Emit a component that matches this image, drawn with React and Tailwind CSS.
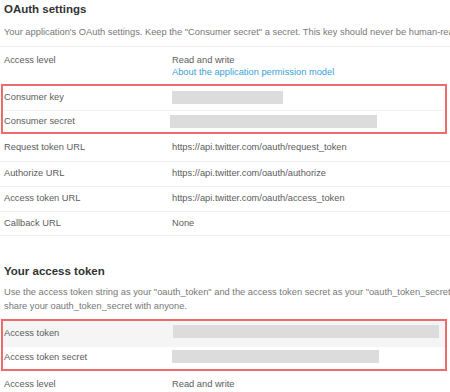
const Row = ({ label, children, className = "", lw = "w-[172px] pl-[4px]" }) => (
  <div className={`flex items-center ${className}`}>
    <div className={`${lw} shrink-0`}>{label}</div>
    <div className="flex-1">{children}</div>
  </div>
)

const Bar = ({ className }) => <div className={`bg-[#dcdcdc] ${className}`} />

const App = () => {
  return (
    <div
      className="w-[450px] h-[392px] overflow-hidden bg-white text-[9.3px] text-[#5c5c5c] whitespace-nowrap"
      style={{ fontFamily: '"Liberation Sans", Arial, sans-serif' }}
    >
      <h2 className="pt-[2px] pl-[4px] text-[11.5px] leading-[14px] font-bold text-[#333]">OAuth settings</h2>
      <p className="mt-[9px] pl-[4px] leading-[14px] text-[#777]">
        Your application's OAuth settings. Keep the "Consumer secret" a secret. This key should never be human-readable in your application.
      </p>

      <div className="mt-[7px] border-t border-[#eeeeee] flex pt-[7px] pb-[6px] leading-[12px]">
        <div className="w-[172px] pl-[4px] shrink-0">Access level</div>
        <div>
          <div>Read and write</div>
          <div className="text-[#3a9fd8]">About the application permission model</div>
        </div>
      </div>

      <div className="ml-[1px] mr-[3px] border-2 border-[#ef6b6b]">
        <Row label="Consumer key" lw="w-[169px] pl-[1px]" className="h-[24px]">
          <Bar className="w-[111px] h-[13px] -mt-[2px]" />
        </Row>
        <Row label="Consumer secret" lw="w-[169px] pl-[1px]" className="h-[22px] border-t border-[#f2f2f2]">
          <Bar className="-ml-[2px] w-[207px] h-[13px] -mt-[1px]" />
        </Row>
      </div>

      <Row label="Request token URL" className="h-[27px]">https://api.twitter.com/oauth/request_token</Row>
      <Row label="Authorize URL" className="h-[25px] border-t border-[#eeeeee]">https://api.twitter.com/oauth/authorize</Row>
      <Row label="Access token URL" className="h-[25px] border-t border-[#eeeeee]">https://api.twitter.com/oauth/access_token</Row>
      <Row label="Callback URL" className="h-[25px] border-y border-[#eeeeee]">None</Row>

      <h2 className="mt-[28px] pl-[4px] text-[11.5px] leading-[14px] font-bold text-[#333]">Your access token</h2>
      <div className="mt-[7px] pl-[4px] leading-[14px] text-[#777]">
        <p>Use the access token string as your "oauth_token" and the access token secret as your "oauth_token_secret" to sign requests with your own Twitter account. Do not</p>
        <p>share your oauth_token_secret with anyone.</p>
      </div>

      <div className="mt-[6px] ml-[1px] mr-[3px] border-2 border-[#ef6b6b]">
        <Row label="Access token" lw="w-[169px] pl-[1px]" className="h-[26px] bg-[#f5f5f5]">
          <Bar className="ml-[1px] w-[266px] h-[13px] -mt-[5px]" />
        </Row>
        <Row label="Access token secret" lw="w-[169px] pl-[1px]" className="h-[22px]">
          <Bar className="w-[207px] h-[13px] -mt-[3px]" />
        </Row>
      </div>

      <Row label="Access level" className="h-[28px]">Read and write</Row>
    </div>
  )
}

export default App
